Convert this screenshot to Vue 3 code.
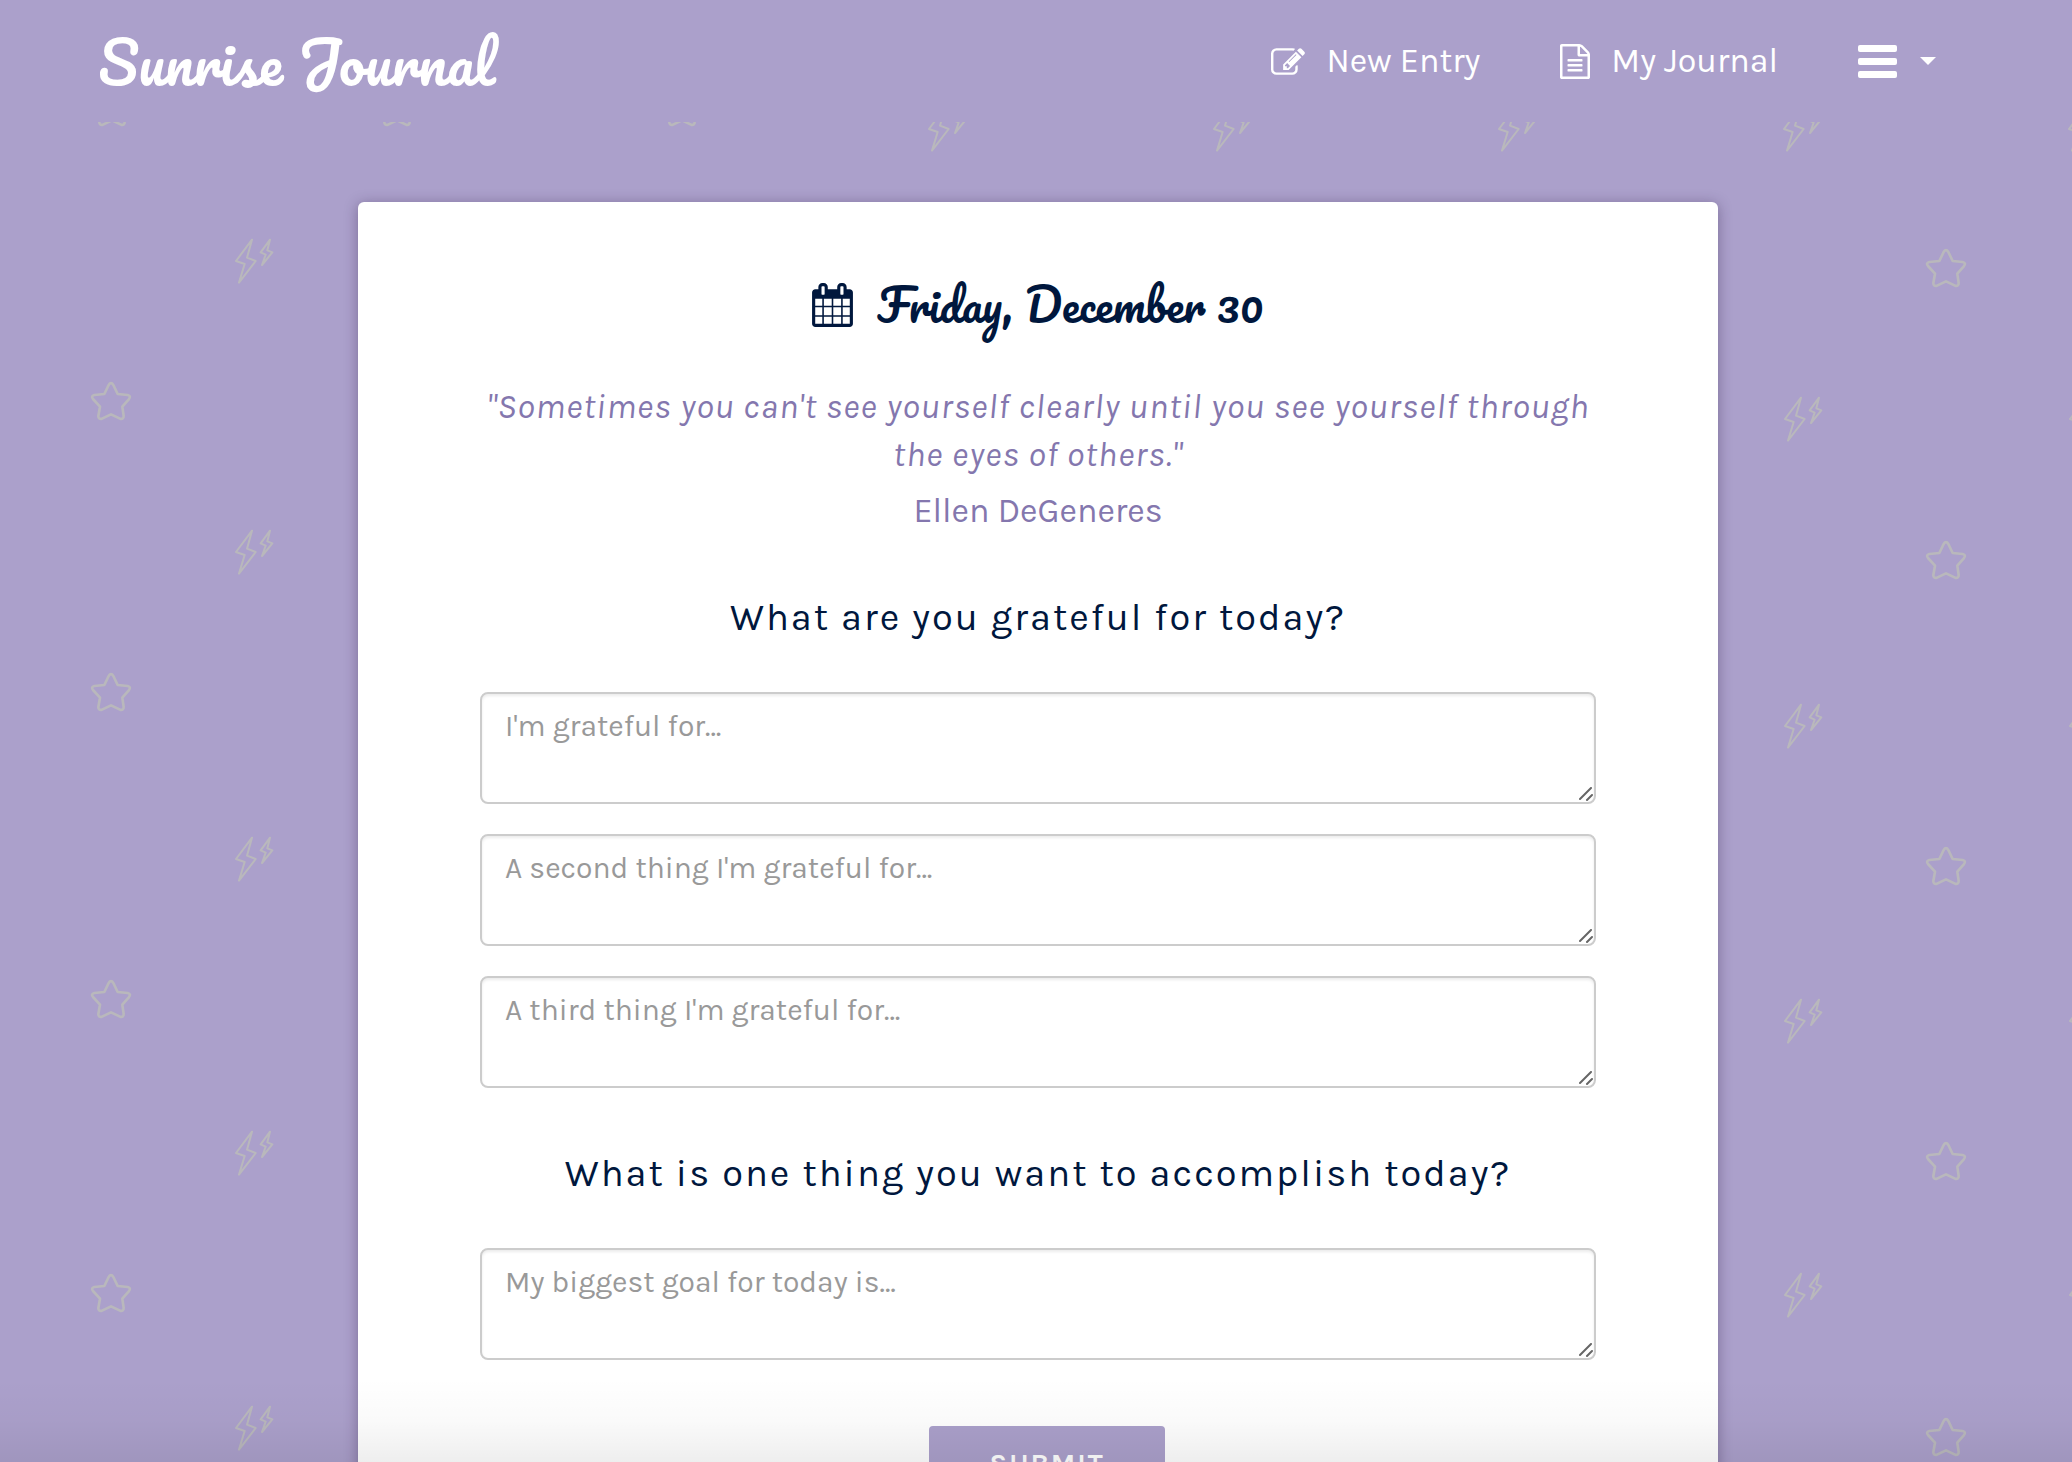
<script setup>
import { ref } from 'vue'

const gratitude = ref([
  { id: 'first', placeholder: "I'm grateful for…", text: '' },
  { id: 'second', placeholder: "A second thing I'm grateful for…", text: '' },
  { id: 'third', placeholder: "A third thing I'm grateful for…", text: '' },
])
const goal = ref('')

const place = (x, rows) => rows.map((y) => ({ x, y }))
const stars = [
  ...[112, 397, 682].map((x) => ({ x, y: 107 })),
  ...place(111, [401, 692, 999, 1293]),
  ...place(1946, [268, 560, 866, 1161, 1437]),
]
const bolts = [
  ...[947, 1232, 1517, 1802, 2087].map((x) => ({ x, y: 129 })),
  ...place(254, [261, 552, 859, 1153, 1428]),
  ...place(1803, [419, 726, 1021, 1295]),
  ...place(2088, [419, 726, 1021, 1295]),
]
</script>

<template>
  <div class="page">
    <svg class="pattern" aria-hidden="true">
      <defs>
        <path
          id="star"
          d="M-20-21-7-48Q0-59 7-48L20-21 50-18Q61-15 54-6L34 17 38 45Q38 56 27 53L0 40-27 53Q-38 56-38 45L-33 17-54-6Q-61-15-50-18Z"
        />
        <path id="bolt" d="M-6-64-54 0-28 9-45 65 5 0-21-10ZM48-64 20-26 35-19 24 12 55-26 40-32Z" />
      </defs>
      <g class="stars">
        <use v-for="(s, i) in stars" :key="i" href="#star" :transform="`translate(${s.x} ${s.y}) scale(.3333)`" />
      </g>
      <g class="bolts">
        <use v-for="(b, i) in bolts" :key="i" href="#bolt" :transform="`translate(${b.x} ${b.y}) scale(.3333)`" />
      </g>
    </svg>

    <header class="navbar">
      <a class="brand" href="#">Sunrise Journal</a>
      <nav class="links">
        <a class="link" href="#new">
          <svg width="34" height="27" viewBox="0 128 1792 1408" aria-hidden="true">
            <path d="M888 1184l116-116-152-152-116 116v56h96v96h56zm440-720q-16-16-33 1l-350 350q-17 17-1 33t33-1l350-350q17-17 1-33zm80 594v190q0 119-84.5 203.5t-203.5 84.5h-832q-119 0-203.5-84.5t-84.5-203.5v-832q0-119 84.5-203.5t203.5-84.5h832q63 0 117 25 15 7 18 23 3 17-9 29l-49 49q-14 14-32 8-23-6-45-6h-832q-66 0-113 47t-47 113v832q0 66 47 113t113 47h832q66 0 113-47t47-113v-126q0-13 9-22l64-64q15-15 35-7t20 29zm-96-738l288 288-672 672h-288v-288zm444 132l-92 92-288-288 92-92q28-28 68-28t68 28l152 152q28 28 28 68t-28 68z" />
          </svg>
          <span>New Entry</span>
        </a>
        <a class="link" href="#journal">
          <svg width="30" height="35" viewBox="128 0 1536 1792" aria-hidden="true">
            <path d="M1596 380q28 28 48 76t20 88v1152q0 40-28 68t-68 28h-1344q-40 0-68-28t-28-68v-1600q0-40 28-68t68-28h896q40 0 88 20t76 48zm-444-244v376h376q-10-29-22-41l-313-313q-12-12-41-22zm384 1528v-1024h-416q-40 0-68-28t-28-68v-416h-768v1536h1280zm-1024-864q0-14 9-23t23-9h704q14 0 23 9t9 23v64q0 14-9 23t-23 9h-704q-14 0-23-9t-9-23v-64zm736 224q14 0 23 9t9 23v64q0 14-9 23t-23 9h-704q-14 0-23-9t-9-23v-64q0-14 9-23t23-9h704zm0 256q14 0 23 9t9 23v64q0 14-9 23t-23 9h-704q-14 0-23-9t-9-23v-64q0-14 9-23t23-9h704z" />
          </svg>
          <span>My Journal</span>
        </a>
        <button class="menu" type="button" aria-label="Menu">
          <svg width="39" height="33" viewBox="0 0 39 33" aria-hidden="true">
            <rect width="39" height="7" rx="2" />
            <rect y="13" width="39" height="7" rx="2" />
            <rect y="26" width="39" height="7" rx="2" />
          </svg>
          <svg width="16" height="8" viewBox="0 0 16 8" aria-hidden="true"><path d="M0 0h16L8 8z" /></svg>
        </button>
      </nav>
    </header>

    <main class="main">
      <form class="card" @submit.prevent>
        <h1 class="date">
          <svg width="41" height="44" viewBox="64 0 1664 1792" aria-hidden="true">
            <path d="M192 1664h288v-288h-288v288zm352 0h320v-288h-320v288zm-352-352h288v-320h-288v320zm352 0h320v-320h-320v320zm-352-384h288v-288h-288v288zm736 736h320v-288h-320v288zm-384-736h320v-288h-320v288zm768 736h288v-288h-288v288zm-384-352h320v-320h-320v320zm-352-864v-288q0-13-9.5-22.5t-22.5-9.5h-64q-13 0-22.5 9.5t-9.5 22.5v288q0 13 9.5 22.5t22.5 9.5h64q13 0 22.5-9.5t9.5-22.5zm736 864h288v-320h-288v320zm-384-384h320v-288h-320v288zm384 0h288v-288h-288v288zm32-480v-288q0-13-9.5-22.5t-22.5-9.5h-64q-13 0-22.5 9.5t-9.5 22.5v288q0 13 9.5 22.5t22.5 9.5h64q13 0 22.5-9.5t9.5-22.5zm384-64v1280q0 52-38 90t-90 38h-1408q-52 0-90-38t-38-90v-1280q0-52 38-90t90-38h128v-96q0-66 47-113t113-47h64q66 0 113 47t47 113v96h384v-96q0-66 47-113t113-47h64q66 0 113 47t47 113v96h128q52 0 90 38t38 90z" />
          </svg>
          <span>Friday, December 30</span>
        </h1>

        <figure class="quote">
          <blockquote>"Sometimes you can't see yourself clearly until you see yourself through the eyes of others."</blockquote>
          <figcaption>Ellen DeGeneres</figcaption>
        </figure>

        <h2 id="grateful">What are you grateful for today?</h2>
        <div class="fields">
          <textarea
            v-for="item in gratitude"
            :id="item.id"
            :key="item.id"
            v-model="item.text"
            aria-labelledby="grateful"
            :placeholder="item.placeholder"
          ></textarea>
        </div>

        <h2><label for="goal">What is one thing you want to accomplish today?</label></h2>
        <div class="fields">
          <textarea id="goal" v-model="goal" placeholder="My biggest goal for today is…"></textarea>
        </div>

        <button class="submit" type="submit">SUBMIT</button>
      </form>
    </main>
    <div class="fade"></div>
  </div>
</template>

<style>
body {
  margin: 0;
  background: #aba0cb;
}
</style>

<style scoped>
.page {
  position: relative;
  height: 100vh;
  overflow: hidden;
  background: #aba0cb;
  font-family: Karla, Roboto, sans-serif;
}
.pattern {
  position: absolute;
  inset: 0;
  width: 100%;
  height: 100%;
  fill: none;
  stroke: #b9b8bc;
  stroke-linejoin: round;
}
.stars {
  stroke-width: 8;
}
.bolts {
  stroke-width: 6;
}
.navbar {
  position: relative;
  display: flex;
  align-items: center;
  justify-content: space-between;
  height: 122px;
  padding: 0 136px 0 98px;
  background: #aba0cb;
  box-sizing: border-box;
}
.brand,
.date {
  font-family: Pacifico, "Liberation Serif", serif;
  font-weight: 400;
}
.brand {
  color: #fff;
  font-size: 58px;
  line-height: 80px;
  text-decoration: none;
}
.links {
  display: flex;
  align-items: center;
  gap: 80px;
}
.link {
  display: flex;
  align-items: center;
  gap: 21px;
  color: #fff;
  font-size: 34px;
  line-height: 48px;
  text-decoration: none;
}
.link svg,
.menu svg {
  fill: #fff;
}
.menu {
  display: flex;
  align-items: center;
  gap: 23px;
  padding: 0;
  border: 0;
  background: none;
}
.main {
  position: relative;
  padding: 80px 0 80px 4px;
}
.card {
  display: flex;
  flex-direction: column;
  max-width: 1360px;
  margin: 0 auto;
  padding: 63px 122px 80px;
  box-sizing: border-box;
  border-radius: 6px;
  background: #fff;
  box-shadow: 0 2px 14px rgba(50, 30, 70, 0.4);
  color: #00173d;
}
.date {
  display: flex;
  align-items: center;
  justify-content: center;
  gap: 24px;
  margin: 0 0 38px;
  font-size: 44px;
  line-height: 80px;
}
.date svg {
  fill: #00173d;
}
.quote {
  margin: 0 0 59px;
  color: #8477ae;
  font-size: 34px;
  line-height: 48px;
  text-align: center;
}
.quote blockquote {
  margin: 0 0 8px;
  font-size: 35px;
  font-style: italic;
  letter-spacing: 1px;
}
h2 {
  margin: 0 0 50px;
  font-size: 38px;
  font-weight: 400;
  line-height: 48px;
  letter-spacing: 2px;
  text-align: center;
}
.fields {
  display: flex;
  flex-direction: column;
  gap: 30px;
  margin-bottom: 62px;
}
textarea {
  display: block;
  width: 100%;
  height: 112px;
  padding: 12px 23px;
  box-sizing: border-box;
  border: 2px solid #ccc;
  border-radius: 8px;
  background: #fff;
  box-shadow: inset 0 2px 3px rgba(0, 0, 0, 0.08);
  color: #00173d;
  font: 30px/40px Karla, Roboto, sans-serif;
  resize: vertical;
}
textarea::placeholder {
  color: #999;
}
textarea::-webkit-resizer {
  background: url("data:image/svg+xml,%3Csvg xmlns='http://www.w3.org/2000/svg' width='15' height='15' stroke='%23666' stroke-width='2' stroke-linecap='round'%3E%3Cpath d='M1 12 12 1M8 13l5-5'/%3E%3C/svg%3E") no-repeat right bottom;
}
.submit {
  align-self: center;
  margin: 4px 0 0 18px;
  padding: 16px 60px;
  border: 0;
  border-radius: 4px;
  background: #aba0cb;
  color: #fff;
  font: 700 28px/44px Karla, Roboto, sans-serif;
  letter-spacing: 2px;
}
.fade {
  position: absolute;
  right: 0;
  bottom: 0;
  left: 0;
  height: 84px;
  background: linear-gradient(rgba(0, 0, 0, 0), rgba(0, 0, 0, 0.02) 50%, rgba(0, 0, 0, 0.065));
  pointer-events: none;
}
</style>
